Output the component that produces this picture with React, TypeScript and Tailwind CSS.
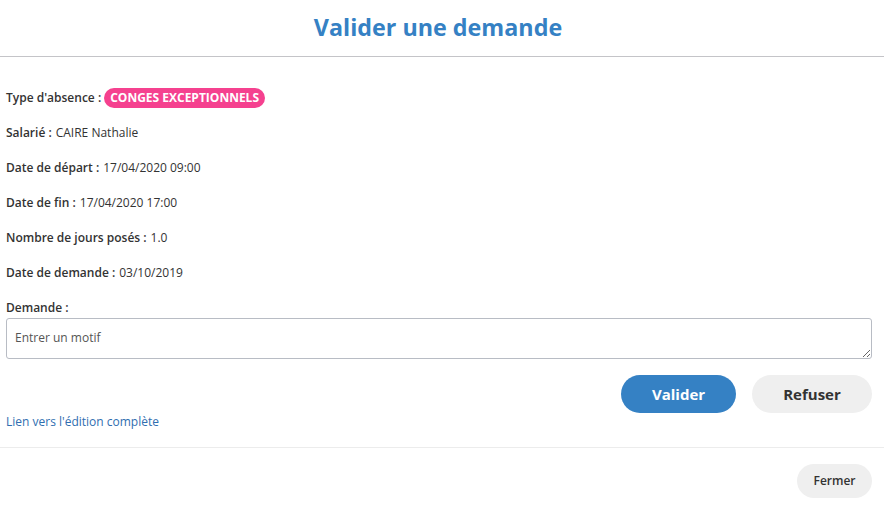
import { useState } from "react"

const rows = [
    { label: "Salarié", value: "CAIRE Nathalie" },
    { label: "Date de départ", value: "17/04/2020 09:00" },
    { label: "Date de fin", value: "17/04/2020 17:00" },
    { label: "Nombre de jours posés", value: "1.0" },
    { label: "Date de demande", value: "03/10/2019" },
]

export default function App() {
    const [motif, setMotif] = useState("")

    return (
        <div className="w-[884px] h-[510px] bg-white text-[#333] font-['Open_Sans',sans-serif] flex flex-col">
            <div className="h-[57px] border-b border-[#c4c4c8] flex items-center justify-center pr-[8px]">
                <h2 className="text-[23.3px] font-bold text-[#3581c4] leading-none">Valider une demande</h2>
            </div>

            <div className="pl-[6px] pr-[12px] pt-[31px] flex flex-col">
                <div className="h-[20px] flex items-center text-[12px]">
                    <span className="font-semibold">Type d'absence :</span>
                    <span className="ml-[3px] h-[20px] px-[6px] rounded-full bg-[#f5418f] text-white font-bold flex items-center">CONGES EXCEPTIONNELS</span>
                </div>

                {rows.map((row) => (
                    <div key={row.label} className="mt-[15px] h-[20px] flex items-center text-[12px]">
                        <span className="font-semibold">{row.label} :</span>
                        <span className="ml-[4px]">{row.value}</span>
                    </div>
                ))}

                <div className="mt-[15px] h-[20px] flex items-center text-[12px] font-semibold">Demande :</div>
                <textarea
                    value={motif}
                    onChange={(e) => setMotif(e.target.value)}
                    placeholder="Entrer un motif"
                    className="h-[41px] w-full border border-[#b8bcc4] rounded-[3px] px-[8px] py-[10px] text-[12px] leading-[18px] placeholder:text-[#555] outline-none"
                />

                <div className="mt-[16px] flex justify-end gap-[16px]">
                    <button className="w-[115px] h-[38px] rounded-full bg-[#3581c4] text-white text-[15px] font-bold">Valider</button>
                    <button className="w-[120px] h-[38px] rounded-full bg-[#efefef] text-[#333] text-[15px] font-bold">Refuser</button>
                </div>

                <a className="mt-0 text-[12px] text-[#2f6eb0] self-start">Lien vers l'édition complète</a>
            </div>

            <div className="mt-[16px] border-t border-[#ececec] px-[12px] pt-[16px] flex justify-end">
                <button className="w-[75px] h-[34px] rounded-full bg-[#efefef] text-[12px] font-semibold text-[#333]">Fermer</button>
            </div>
        </div>
    )
}
